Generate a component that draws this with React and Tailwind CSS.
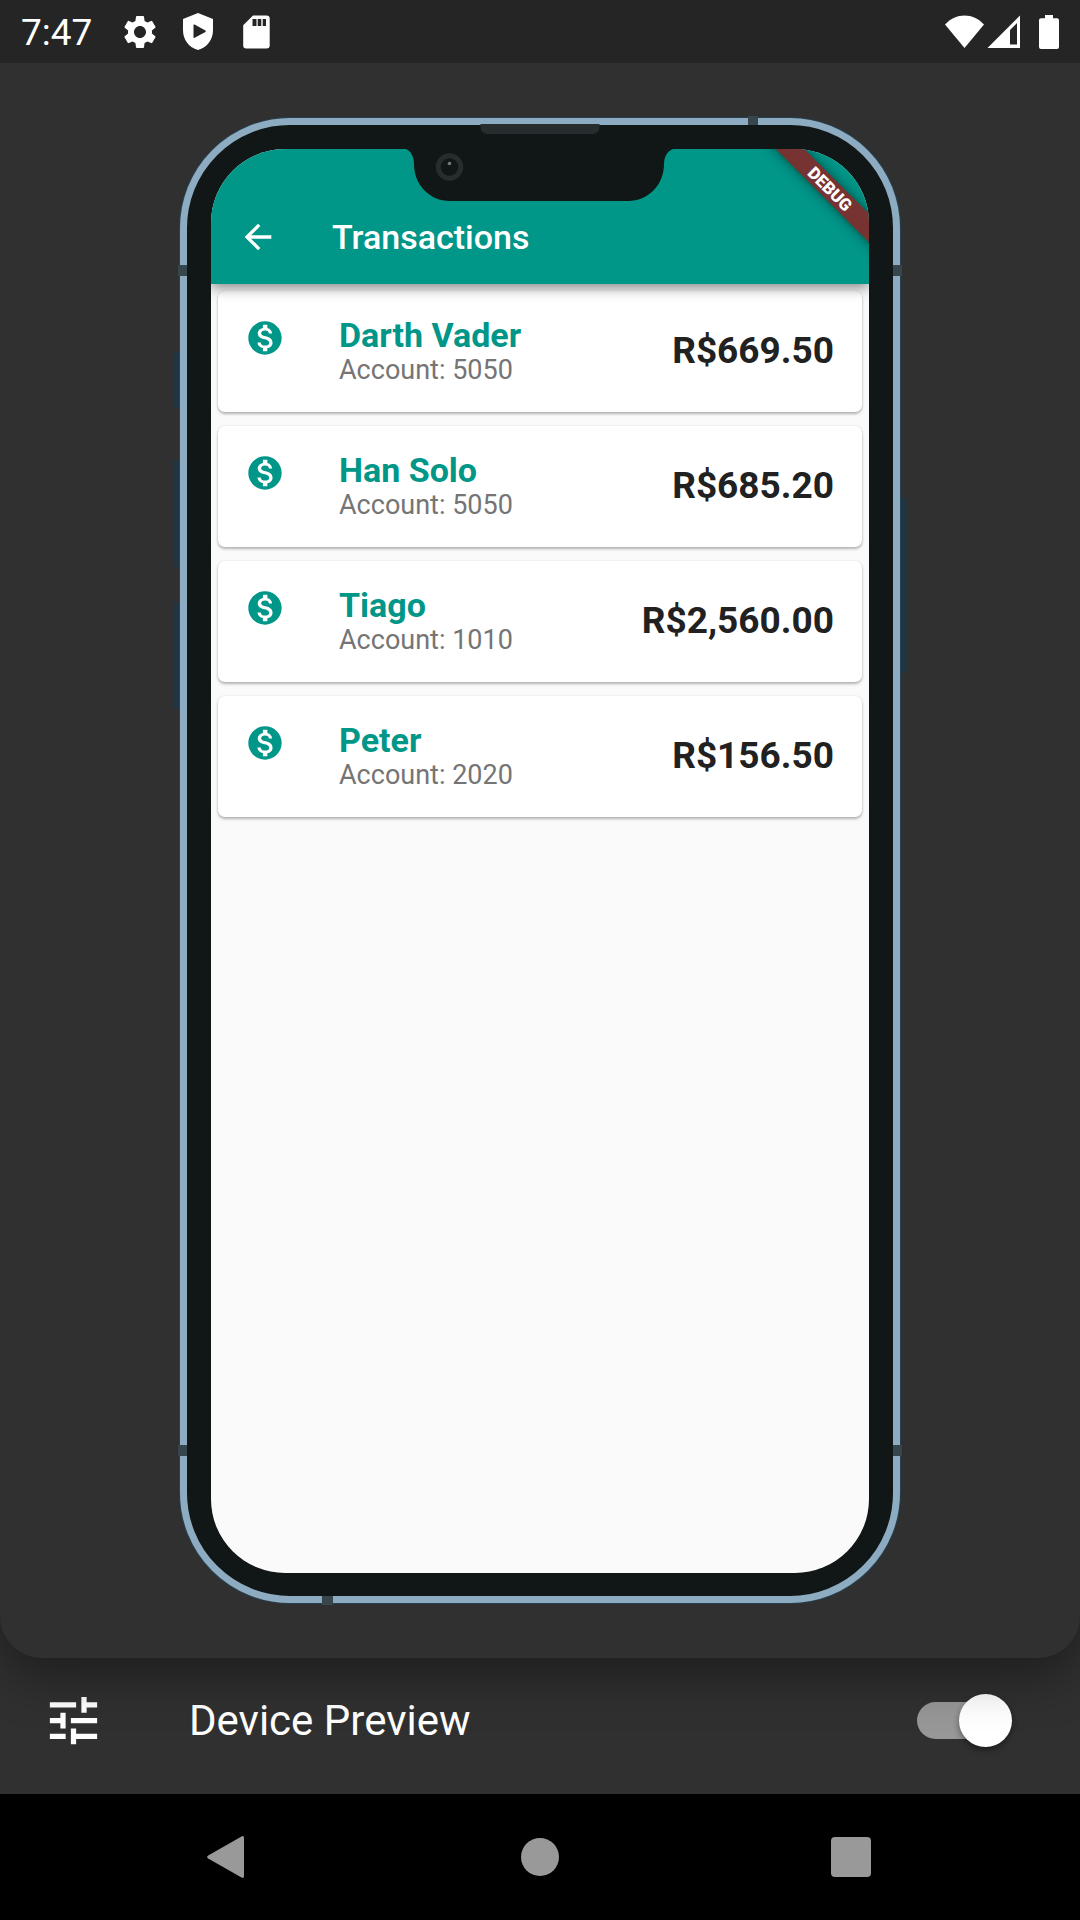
import React, { useState } from "react";
import { MdArrowBack, MdMonetizationOn, MdSettings, MdTune } from "react-icons/md";

const transactions = [
  { name: "Darth Vader", account: "5050", amount: "R$669.50" },
  { name: "Han Solo", account: "5050", amount: "R$685.20" },
  { name: "Tiago", account: "1010", amount: "R$2,560.00" },
  { name: "Peter", account: "2020", amount: "R$156.50" },
];

function ShieldIcon() {
  return (
    <svg width="30" height="37" viewBox="0 0 30 37" aria-hidden="true">
      <path
        fill="#fff"
        fillRule="evenodd"
        d="M15 0 L30 6 V17 C30 27 24 34.5 15 37 C6 34.5 0 27 0 17 V6 Z M10.5 12.3 V24.2 Q10.5 25.4 11.6 24.8 L22.4 18.9 Q23.4 18.2 22.4 17.6 L11.6 11.6 Q10.5 11 10.5 12.3 Z"
      />
    </svg>
  );
}

function SdCardIcon() {
  return (
    <svg width="27" height="34" viewBox="0 0 27 34" aria-hidden="true">
      <path
        fill="#fff"
        fillRule="evenodd"
        d="M10 0.5 H23.5 Q26.7 0.5 26.7 3.5 V30.5 Q26.7 33.5 23.5 33.5 H3.2 Q0.2 33.5 0.2 30.5 V10.2 Z M9.5 4 V11 H13.5 V4 Z M14.7 4 V11 H18.3 V4 Z M19.7 4 V11 H23 V4 Z"
      />
    </svg>
  );
}

function StatusBar() {
  return (
    <header className="flex h-[63px] items-center justify-between bg-[#252525] pl-[21px] pr-[21px] text-white">
      <div className="flex items-center">
        <time className="pt-0.5 text-[37px] leading-[43px]">7:47</time>
        <MdSettings size={40} className="ml-7" aria-hidden="true" />
        <div className="ml-[23px]">
          <ShieldIcon />
        </div>
        <div className="ml-[30px]">
          <SdCardIcon />
        </div>
      </div>
      <div className="flex items-center">
        <svg width="39" height="34" viewBox="0 0 39 34" aria-hidden="true">
          <path fill="#fff" d="M0 9.5 C11 -2.6 28 -2.6 39 9.5 L19.5 33 Z" />
        </svg>
        <svg className="ml-[3px]" width="33" height="34" viewBox="0 0 33 34" aria-hidden="true">
          <path fill="#fff" fillRule="evenodd" d="M33 0.5 V33 H0.5 Z M30 8 L23 15 V29.6 H30 Z" />
        </svg>
        <svg className="ml-[19px]" width="20" height="34" viewBox="0 0 20 34" aria-hidden="true">
          <path
            fill="#fff"
            d="M6 0 H14 V3.3 H18 Q20 3.3 20 5.3 V32 Q20 34 18 34 H2 Q0 34 0 32 V5.3 Q0 3.3 2 3.3 H6 Z"
          />
        </svg>
      </div>
    </header>
  );
}

function Notch() {
  return (
    <svg
      className="absolute left-1/2 top-0 z-20 -translate-x-1/2"
      width="268"
      height="53"
      viewBox="0 0 268 53"
      aria-hidden="true"
    >
      <path
        fill="#111616"
        d="M0 0 C5 2 8 8 8 15 C8 36 24 52 44 52 H222 C242 52 258 36 258 15 C258 8 261 2 267 0 Z"
      />
      <circle cx="43.5" cy="18" r="11.2" fill="none" stroke="#272c2e" strokeWidth="5" />
      <circle cx="43.5" cy="14.5" r="1.8" fill="#6f7d80" />
    </svg>
  );
}

function DebugBanner() {
  return (
    <div className="absolute -right-[61px] top-[30px] z-10 h-5 w-[200px] rotate-45 bg-[#763331] text-center text-[17px] font-black leading-5 text-white shadow-[0_0_12px_rgba(0,0,0,0.5)]">
      DEBUG
    </div>
  );
}

function TransactionCard({ name, account, amount }) {
  return (
    <li className="flex items-center rounded-[7px] bg-white pb-[27px] pl-[27px] pr-7 pt-6 shadow-[0_2px_3px_rgba(0,0,0,0.28),0_0_3px_rgba(0,0,0,0.08)]">
      <MdMonetizationOn size={40} className="mr-[54px] mt-[3px] shrink-0 self-start text-[#009688]" aria-hidden="true" />
      <div className="min-w-0 flex-1">
        <h2 className="text-[34px] font-bold leading-10 text-[#009688]">{name}</h2>
        <p className="text-[27px] leading-[30px] text-[#757575]">Account: {account}</p>
      </div>
      <p className="text-[37px] font-bold leading-[43px] text-[#212121]">{amount}</p>
    </li>
  );
}

function TransactionsScreen() {
  return (
    <div className="relative flex-1 overflow-hidden rounded-[74px] bg-[#fafafa]">
      <div className="relative z-10 bg-[#009688] pt-[41px] shadow-[0_4px_12px_rgba(0,0,0,0.45)]">
        <div className="flex h-[94px] items-center px-[27px] text-white">
          <button type="button" aria-label="Back" className="mr-[54px]">
            <MdArrowBack size={40} />
          </button>
          <h1 className="text-[34px] font-medium leading-10">Transactions</h1>
        </div>
      </div>
      <ul className="flex flex-col gap-3.5 p-[7px]">
        {transactions.map((item) => (
          <TransactionCard key={item.name} {...item} />
        ))}
      </ul>
      <DebugBanner />
      <Notch />
    </div>
  );
}

function Phone() {
  return (
    <div className="relative flex w-2/3 flex-1">
      <span className="absolute -left-[7px] top-[234px] h-14 w-3 rounded-[3px] bg-[#203441]" />
      <span className="absolute -left-[7px] top-[342px] h-[107px] w-3 rounded-[3px] bg-[#203441]" />
      <span className="absolute -left-[7px] top-[484px] h-[107px] w-3 rounded-[3px] bg-[#203441]" />
      <span className="absolute -right-[7px] top-[380px] h-[175px] w-3 rounded-[3px] bg-[#203441]" />
      <div className="relative flex flex-1 flex-col rounded-[110px] border-[7px] border-[#8dacc2] bg-[#111616] px-6 pb-[23px] pt-6 shadow-[0_0_0_1px_#27404f]">
        <TransactionsScreen />
      </div>
      <span className="absolute left-1/2 top-[6px] h-2.5 w-[119px] -translate-x-1/2 rounded-b-[7px] bg-[#272c2e]" />
      <span className="absolute -top-0.5 right-[142px] h-[9px] w-2.5 bg-[#37464d]" />
      <span className="absolute -bottom-0.5 left-[142px] h-[9px] w-[11px] bg-[#37464d]" />
      <span className="absolute -left-0.5 top-[147px] h-[11px] w-[9px] bg-[#37464d]" />
      <span className="absolute -right-0.5 top-[147px] h-[11px] w-[9px] bg-[#37464d]" />
      <span className="absolute -left-0.5 bottom-[147px] h-[11px] w-[9px] bg-[#37464d]" />
      <span className="absolute -right-0.5 bottom-[147px] h-[11px] w-[9px] bg-[#37464d]" />
    </div>
  );
}

function PreviewBar() {
  const [enabled, setEnabled] = useState(true);
  return (
    <div className="flex h-[136px] items-center bg-[#303030] pb-[11px] pl-[42px] pr-[68px] text-white">
      <MdTune size={63} className="shrink-0" aria-hidden="true" />
      <label htmlFor="device-preview" className="ml-[84px] flex-1 text-[42px] leading-[50px]">
        Device Preview
      </label>
      <input
        id="device-preview"
        type="checkbox"
        role="switch"
        checked={enabled}
        onChange={(event) => setEnabled(event.target.checked)}
        className="relative mr-2 h-[37px] w-[87px] appearance-none rounded-full bg-[#979797] before:absolute before:-left-2 before:-top-2 before:size-[53px] before:rounded-full before:bg-white before:shadow-[0_3px_6px_rgba(0,0,0,0.4)] before:content-[''] checked:before:left-[42px]"
      />
    </div>
  );
}

function NavigationBar() {
  return (
    <nav className="grid h-[126px] grid-cols-3 bg-black px-[73px]">
      <button type="button" aria-label="Back" className="flex items-center justify-center">
        <svg width="46" height="42" viewBox="0 0 46 42" aria-hidden="true">
          <path
            fill="#999"
            d="M35.5 0.4 Q38 -0.8 38 2 V40 Q38 42.8 35.5 41.6 L2.2 22.6 Q0 21 2.2 19.4 Z"
          />
        </svg>
      </button>
      <button type="button" aria-label="Home" className="flex items-center justify-center">
        <span className="size-[38px] rounded-full bg-[#999]" />
      </button>
      <button type="button" aria-label="Overview" className="flex items-center justify-center">
        <span className="size-10 rounded-[4px] bg-[#999]" />
      </button>
    </nav>
  );
}

export default function App() {
  return (
    <div className="flex min-h-screen flex-col bg-[#303030] font-['Roboto',sans-serif]">
      <StatusBar />
      <main className="relative z-10 flex flex-1 flex-col items-center rounded-b-[42px] bg-[#303030] py-[55px] shadow-[0_18px_50px_rgba(0,0,0,0.38)] [clip-path:inset(0_0_-120px_0)]">
        <Phone />
      </main>
      <PreviewBar />
      <NavigationBar />
    </div>
  );
}
